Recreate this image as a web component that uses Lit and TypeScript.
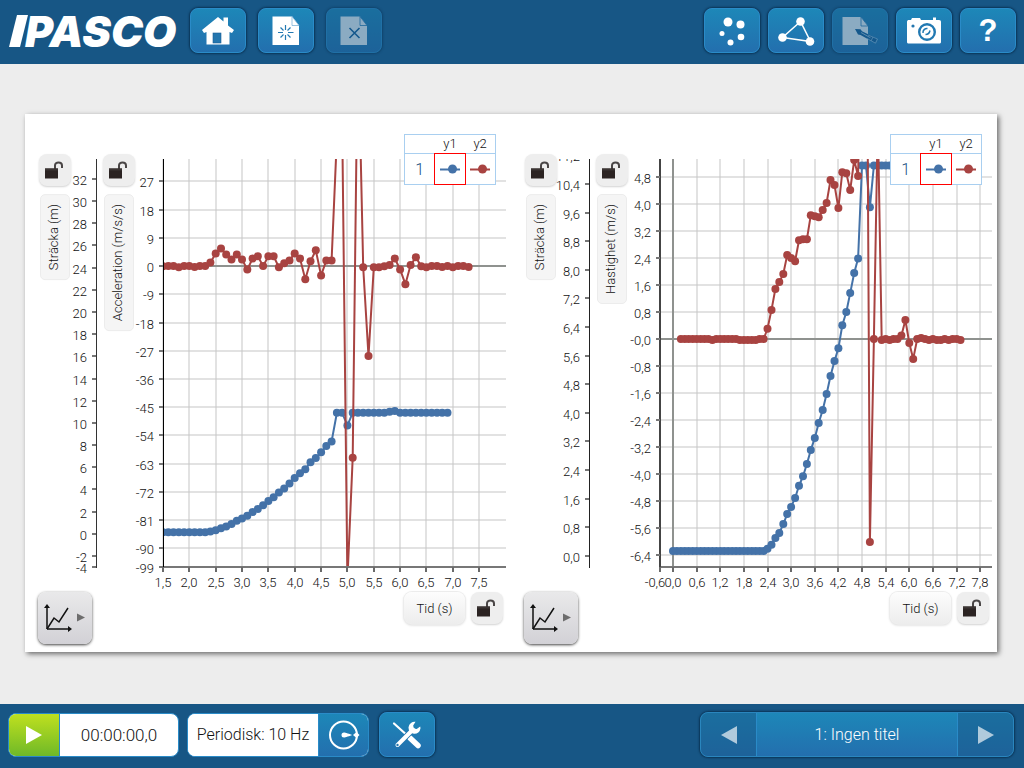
import { LitElement, html, svg, css, nothing } from "lit";
import { customElement, property, state } from "lit/decorators.js";

type Point = [number, number];

interface Axis {
  title: string;
  unitLabel: string;
  x: number;
  min: number;
  max: number;
  ticks: number[];
  endTick?: number;
  decimals: number;
  color: string;
  thickness: number;
}

interface GraphConfig {
  id: string;
  railWidth: number;
  distance: Axis;
  second: Axis;
  timeMin: number;
  timeMax: number;
  timeTicks: number[];
  timeEnd?: number;
  series: Point[];
}

const range = (from: number, to: number, step: number): number[] => {
  const out: number[] = [];
  const n = Math.round((to - from) / step);
  for (let i = 0; i <= n; i++) out.push(from + i * step);
  return out;
};

const timed = (start: number, values: number[]): Point[] =>
  values.map((v, i) => [start + i * 0.1, v] as Point);

const swedish = (v: number, decimals: number): string => v.toFixed(decimals).replace(".", ",");

const distanceRun = timed(0, [
  ...Array(24).fill(0.14),
  0.2, 0.31, 0.5, 0.64, 0.89, 1.17, 1.37, 1.62, 1.96, 2.23, 2.57, 2.96, 3.3, 3.72, 4.08, 4.53,
  5.03, 5.45, 5.81, 6.45, 6.82, 7.35, 7.91, 8.32, 10.92, 10.92, 9.75,
  ...Array(7).fill(10.92), 11.0, 11.08, ...Array(10).fill(10.92),
]);

const accelerationRun = timed(1.5, [
  -0.1, 0, 0, -0.4, 0, 0, -0.3, 0, 0, 1.1, 4, 5.6, 3.7, 2.1, 3.7, 2.1, -1.1, 2.4, 3.1, 0, 3.1,
  3.1, -0.4, 0.9, 1.8, 4, 2.4, -4.2, 1.5, 5, -3, 1.8, 1.8, 41, 48, -100, -61.1, 75, -0.4, -28.7,
  -0.4, -0.4, -0.1, 0.3, 2.4, -1.1, -5.8, 0.3, 2.8, -0.1, -0.4, 0, 0, -0.3, 0, -0.4, 0, 0, -0.3,
]);

const velocityRun = timed(0.2, [
  0, 0, 0, 0, 0, 0, 0, 0, -0.03, 0, 0, 0, 0, 0, 0, -0.03, -0.03, -0.03, -0.03, -0.03, 0, 0,
  0.3, 0.86, 1.48, 1.68, 1.92, 2.48, 2.39, 2.3, 2.92, 2.95, 2.95, 3.66, 3.63, 3.6, 3.81, 4.02,
  4.7, 4.55, 3.87, 4.93, 4.9, 4.4, 5.29, 4.82, 11, 15, -6, 0, 6.5, -0.03, 0, -0.03, 0, 0, 0.1,
  0.56, -0.12, -0.59, 0, 0.03, 0, -0.03, 0, -0.03, -0.03, 0, -0.03, 0, 0, -0.03,
]);

const graphs: GraphConfig[] = [
  {
    id: "acceleration",
    railWidth: 64,
    distance: {
      title: "Sträcka", unitLabel: "(m)", x: 71, min: -3, max: 33.8,
      ticks: range(-2, 32, 2), endTick: -4, decimals: 0, color: "#333", thickness: 1,
    },
    second: {
      title: "Acceleration", unitLabel: "(m/s/s)", x: 138, min: -95.9, max: 34.1,
      ticks: range(-90, 27, 9), endTick: -99, decimals: 0, color: "#000", thickness: 1,
    },
    timeMin: 1.5,
    timeMax: 8.01,
    timeTicks: range(1.5, 7.5, 0.5),
    series: accelerationRun,
  },
  {
    id: "velocity",
    railWidth: 71,
    distance: {
      title: "Sträcka", unitLabel: "(m)", x: 78, min: -0.31, max: 11.1,
      ticks: range(0, 11.2, 0.8), decimals: 1, color: "#222", thickness: 1,
    },
    second: {
      title: "Hastighet", unitLabel: "(m/s)", x: 149, min: -6.74, max: 5.32,
      ticks: range(-6.4, 4.8, 0.8), decimals: 1, color: "#444", thickness: 2,
    },
    timeMin: -0.33,
    timeMax: 8.1,
    timeTicks: range(0, 7.8, 0.6),
    timeEnd: -0.6,
    series: velocityRun,
  },
];

const lockIcon = html`
  <svg width="20" height="18" viewBox="1 0 20 18" aria-hidden="true">
    <path d="M11 8V4.6C11 2.6 12.5 1.4 14.5 1.4S18 2.6 18 4.6V7" fill="none" stroke="#4a4646" stroke-width="2" />
    <rect x="1" y="7.5" width="13" height="10" fill="#2b2322" />
    <rect x="1" y="7.5" width="13" height="2" fill="#3b3433" />
  </svg>`;

@customElement("data-graph")
class DataGraph extends LitElement {
  @property({ attribute: false }) config!: GraphConfig;
  @state() private w = 486;
  @state() private h = 538;
  private observer?: ResizeObserver;

  static styles = css`
    :host { display: block; min-width: 0; }
    .panel {
      display: grid;
      height: 100%;
      grid-template-rows: 20px 20px minmax(0, 1fr) 60px;
      grid-template-columns: minmax(0, 1fr);
    }
    .canvas { grid-area: 1 / 1 / -1 / -1; min-height: 0; overflow: hidden; }
    .canvas svg { display: block; }
    .rails { grid-area: 3 / 1; display: flex; padding-left: 14px; align-items: flex-start; }
    .rail { display: flex; flex-direction: column; align-items: flex-start; gap: 8px; }
    button {
      font: inherit; color: #111; border: 0; margin: 0; padding: 0; cursor: pointer;
      display: flex; align-items: center; justify-content: center;
    }
    .lock {
      width: 32px; height: 32px; border-radius: 8px; background: #eee;
      box-shadow: 0 1px 2px rgba(0, 0, 0, 0.18);
    }
    .axis-title {
      width: 30px; margin-left: 1px; padding: 9px 0 9px 2px; border-radius: 5px; background: #f5f5f5;
      border: 1px solid #ececec; box-sizing: border-box; font-size: 13px; line-height: 26px;
      writing-mode: vertical-rl; transform: rotate(180deg); white-space: nowrap;
    }
    .legend-wrap { grid-area: 2 / 1 / 4 / 2; justify-self: end; align-self: start; padding-right: 15px; }
    .legend {
      border-collapse: collapse; background: #fff; border: 1px solid #a9cff0;
      font-size: 13px; color: #111; table-layout: fixed; width: 92px;
    }
    .legend th { font-weight: inherit; padding: 0; height: 18px; line-height: 18px; }
    .legend td { padding: 0; height: 30px; text-align: center; }
    .legend tbody tr { border-top: 1px solid #a9cff0; }
    .legend .run { color: #175082; font-size: 16px; text-align: center; }
    .legend .selected { border: 1px solid #f00; }
    .legend svg { display: block; margin: 0 auto; }
    .foot {
      grid-area: 4 / 1; display: flex; align-items: flex-start; gap: 6px;
      padding: 0 8px 0 13px;
    }
    .menu {
      width: 54px; height: 52px; margin-right: auto; border-radius: 8px;
      background: linear-gradient(#e9e9ea, #d2d1d6); box-shadow: 0 1px 3px rgba(0, 0, 0, 0.75);
    }
    .time {
      width: 61px; height: 32px; border-radius: 8px; font-size: 13px;
      background: linear-gradient(#fdfdfd, #ededed); box-shadow: 0 0 0 1px #ececec, 0 1px 3px rgba(0, 0, 0, 0.2);
    }
  `;

  firstUpdated() {
    const box = this.renderRoot.querySelector(".canvas") as HTMLElement;
    this.observer = new ResizeObserver(() => {
      this.w = box.clientWidth || this.w;
      this.h = box.clientHeight || this.h;
    });
    this.observer.observe(box);
  }

  disconnectedCallback() {
    super.disconnectedCallback();
    this.observer?.disconnect();
  }

  private trace(points: Point[], color: string, x: (v: number) => number, y: (v: number) => number) {
    const path = points.map(([t, v]) => `${x(t).toFixed(1)},${y(v).toFixed(1)}`).join(" ");
    return svg`
      <polyline points=${path} fill="none" stroke=${color} stroke-width="2" />
      ${points.map(([t, v]) => svg`<circle cx=${x(t).toFixed(1)} cy=${y(v).toFixed(1)} r="4" fill=${color} />`)}`;
  }

  private axis(axis: Axis, y: (v: number) => number, top: number, bottom: number) {
    const marks = axis.ticks.map((v) => ({ v, at: y(v) }));
    if (axis.endTick !== undefined) marks.push({ v: axis.endTick, at: bottom });
    const lineX = axis.thickness % 2 ? axis.x + 0.5 : axis.x;
    return svg`
      <line x1=${lineX} x2=${lineX} y1=${top} y2=${bottom + 1} stroke=${axis.color} stroke-width=${axis.thickness} />
      ${marks.map(({ v, at }) => {
        const ty = Math.round(at);
        return svg`
          ${ty >= top ? svg`<line x1=${axis.x - 4} x2=${axis.x} y1=${ty} y2=${ty} stroke="#777" stroke-width="2" />` : nothing}
          <text x=${axis.x - 9} y=${ty + 6} text-anchor="end">${
            Math.abs(v) < 1e-6 && axis.title === "Hastighet" ? "-0,0" : swedish(v, axis.decimals)
          }</text>`;
      })}`;
  }

  private chart() {
    const c = this.config;
    const { w, h } = this;
    const left = c.second.x;
    const right = w - 5;
    const top = 45;
    const bottom = h - 85;
    const x = (v: number) => left + ((v - c.timeMin) / (c.timeMax - c.timeMin)) * (right - left);
    const scale = (a: Axis) => (v: number) => bottom - ((v - a.min) / (a.max - a.min)) * (bottom - top);
    const yd = scale(c.distance);
    const ys = scale(c.second);
    const zeroX = c.timeMin < 0 ? Math.round(x(0)) : undefined;
    const zeroY = Math.round(ys(0));
    const times = c.timeTicks.map((v) => ({ v, at: Math.round(x(v)) }));
    if (c.timeEnd !== undefined) times.unshift({ v: c.timeEnd, at: left });
    return html`
      <svg width=${w} height=${h} viewBox="0 0 ${w} ${h}" role="img"
        aria-label="${c.distance.title} och ${c.second.title} mot tid"
        font-size="13" fill="#111">
        <defs>
          <clipPath id="plot"><rect x=${left} y=${top} width=${right - left} height=${bottom - top} /></clipPath>
          <clipPath id="labels"><rect x="0" y=${top} width=${w} height=${h - top} /></clipPath>
        </defs>
        <g stroke="#c6c6c6" stroke-opacity="0.5" stroke-width="2">
          ${times.map(({ at }) => svg`<line x1=${at} x2=${at} y1=${top} y2=${bottom} />`)}
          ${c.second.ticks.map((v) => {
            const ty = Math.round(ys(v));
            return svg`<line x1=${left} x2=${right} y1=${ty} y2=${ty} />`;
          })}
        </g>
        <g stroke="#8f928f" stroke-width="2">
          <line x1=${left} x2=${right} y1=${zeroY} y2=${zeroY} />
          ${zeroX === undefined ? nothing : svg`<line x1=${zeroX} x2=${zeroX} y1=${top} y2=${bottom} />`}
        </g>
        <g clip-path="url(#plot)">
          ${this.trace(distanceRun, "#4472a8", x, yd)}
          ${this.trace(c.series, "#a84341", x, ys)}
        </g>
        <line x1=${left} x2=${right} y1=${bottom} y2=${bottom} stroke="#777" stroke-width="2" />
        <g clip-path="url(#labels)">
          ${this.axis(c.distance, yd, top, bottom)}
          ${this.axis(c.second, ys, top, bottom)}
          ${times.map(({ v, at }) => svg`
            <line x1=${at} x2=${at} y1=${bottom} y2=${bottom + 5} stroke="#6a6a6a" stroke-width="2" />
            <text x=${v < 0 ? at - 5 : at} y=${bottom + 20} text-anchor="middle">${swedish(v, 1)}</text>`)}
        </g>
      </svg>`;
  }

  private rail(axis: Axis) {
    return html`
      <div class="rail">
        <button class="lock" aria-label="Lås axeln ${axis.title}">${lockIcon}</button>
        <button class="axis-title">${axis.title} ${axis.unitLabel}</button>
      </div>`;
  }

  private swatch(color: string) {
    return html`<svg width="20" height="10" viewBox="0 0 20 10" aria-hidden="true">
      <line x1="0" x2="20" y1="5.5" y2="5.5" stroke=${color} stroke-width="2" />
      <circle cx="12.5" cy="5" r="4.5" fill=${color} />
    </svg>`;
  }

  render() {
    const c = this.config;
    return html`
      <section class="panel">
        <div class="canvas">${this.chart()}</div>
        <div class="rails">
          <div style="width:${c.railWidth}px">${this.rail(c.distance)}</div>
          ${this.rail(c.second)}
        </div>
        <div class="legend-wrap">
          <table class="legend">
            <thead><tr><th></th><th scope="col">y1</th><th scope="col">y2</th></tr></thead>
            <tbody>
              <tr>
                <td class="run">1</td>
                <td class="selected">${this.swatch("#4472a8")}</td>
                <td>${this.swatch("#a84341")}</td>
              </tr>
            </tbody>
          </table>
        </div>
        <div class="foot">
          <button class="menu" aria-label="Diagramverktyg">
            <svg width="44" height="30" viewBox="0 0 44 30" aria-hidden="true">
              <path d="M4 26V4M4 26H26" fill="none" stroke="#111" stroke-width="1.5" />
              <path d="M4 1l3 4H1zM29 26l-4-3v6z" fill="#111" />
              <path d="M4 26l7-11 5 4 9-14" fill="none" stroke="#111" stroke-width="1.5" />
              <path d="M34 10.500v8l8-4z" fill="#6d6d6d" />
            </svg>
          </button>
          <button class="time">Tid (s)</button>
          <button class="lock" aria-label="Lås tidsaxeln">${lockIcon}</button>
        </div>
      </section>`;
  }
}

const icons = {
  home: html`<svg width="32" height="30" viewBox="0 0 32 30" aria-hidden="true">
    <path fill="#fff" d="M16 1l5.500 4.500V1.500h4.500v8L32 14l-2 3-2.500-1v12.500H4.500V16L2 17l-2-3z" />
    <rect x="11" y="17" width="8" height="10" fill="#2476ae" stroke="#1a5f96" stroke-width="0.6" />
  </svg>`,
  newPage: html`<svg width="28" height="30" viewBox="0 0 28 30" aria-hidden="true">
    <path fill="#fff" d="M0.500 0.500h19.500l7 9v19.500H0.500z" />
    <path fill="#fff" stroke="#7fb4d8" stroke-width="0.8" d="M20 0.500v9h7z" />
    <g stroke="#2279b2" stroke-width="1.200">
      <path d="M13.500 9v5M13.500 19v5M6 16.500h5M16 16.500h5.500M8.500 11.500l3 3M15.500 18.500l3 3M18.500 11.500l-3 3M11.500 18.500l-3 3" />
    </g>
  </svg>`,
  deletePage: html`<svg width="28" height="30" viewBox="0 0 28 30" aria-hidden="true">
    <path fill="#fff" d="M0.500 0.500h19.500l7 9v19.500H0.500z" />
    <path fill="#fff" stroke="#2279b2" stroke-width="0.8" d="M20 0.500v9h7z" />
    <path stroke="#125a94" stroke-width="1.600" d="M9.500 12l10 10M19.500 12l-10 10" />
  </svg>`,
  dots: html`<svg width="28" height="30" viewBox="0 0 28 30" aria-hidden="true" fill="#fff">
    <circle cx="10" cy="6" r="4.500" /><circle cx="22.500" cy="8.500" r="4" />
    <circle cx="4" cy="17.500" r="2.500" /><circle cx="23" cy="21" r="3.300" /><circle cx="12.500" cy="26.500" r="3" />
  </svg>`,
  triangle: html`<svg width="38" height="30" viewBox="0 0 38 30" aria-hidden="true" fill="#fff">
    <path d="M23.500 5.500L5.500 21.500l28 4z" fill="none" stroke="#fff" stroke-width="1.500" />
    <circle cx="23.500" cy="5.500" r="4.300" /><circle cx="5.500" cy="21.500" r="4.300" /><circle cx="33" cy="25.500" r="4.300" />
  </svg>`,
  journal: html`<svg width="38" height="30" viewBox="0 0 38 30" aria-hidden="true">
    <path fill="#fff" d="M1.500 1h18.500l7 9v19H1.500z" />
    <path fill="#fff" stroke="#2279b2" stroke-width="0.800" d="M20 1v9h7z" />
    <path fill="#125a94" d="M14 13l5.500.3 1.500 2L36 22.500l-2 4.500-14.500-8-2.500-.5z" />
    <path d="M20 16.500l9.500 5.300" stroke="#fff" stroke-width="0.600" />
    <path fill="none" stroke="#9ac4e2" stroke-width="0.800" d="M27 19l9.500 4-2 4.200L26 22.500M32 21l-2 4" />
  </svg>`,
  camera: html`<svg width="36" height="30" viewBox="0 0 36 30" aria-hidden="true">
    <path fill="#fff" d="M3 4h2l1-2h8l1 2h12V1.500h3V4h3c1.500 0 2 .8 2 2v20c0 1-.8 1.500-2 1.500H3c-1.200 0-2-.500-2-1.500V6C1 4.500 1.800 4 3 4z" />
    <circle cx="7" cy="10" r="1.600" fill="#2476ae" />
    <circle cx="21" cy="16" r="7.800" fill="#fff" stroke="#2279b2" stroke-width="2.400" />
    <path d="M17 17a4 4 0 0 1 4.500-4.500M19.500 18.500c2 0 4-1.500 4.500-4" fill="none" stroke="#2279b2" stroke-width="1.500" />
  </svg>`,
  tools: html`<svg width="30" height="28" viewBox="0 0 30 28" aria-hidden="true">
    <path d="M2 2.500L17 16" stroke="#fff" stroke-width="2.200" stroke-linecap="round" />
    <path d="M18 17l8 7.500" stroke="#fff" stroke-width="5.500" stroke-linecap="round" />
    <path d="M6 23.500L21.500 8" stroke="#2476ae" stroke-width="6" />
    <path d="M5.500 24L21 8.500" stroke="#fff" stroke-width="4" stroke-linecap="round" />
    <path d="M23.500 0.800a6 6 0 1 0 5 6.500l-.3-1.800-3.500 2.500-3-.5-.5-3z" fill="#fff" />
    <circle cx="5.500" cy="24" r="1.200" fill="#2476ae" />
  </svg>`,
  rate: html`<svg width="32" height="32" viewBox="0 0 32 32" aria-hidden="true">
    <circle cx="15.500" cy="16" r="13.500" fill="none" stroke="#fff" stroke-width="2" />
    <path d="M16 13.500c1 0 6 1.700 8.500 2.500-2.500.8-7.500 2.500-8.500 2.500a2.500 2.500 0 0 1 0-5z" fill="#fff" />
    <path d="M25 16l3.500-3 3 3-3 3z" fill="#fff" />
  </svg>`,
  right: html`<svg width="18" height="20" viewBox="0 0 18 20" aria-hidden="true"><path fill="#fff" d="M1 1l16 9-16 9z" /></svg>`,
  left: html`<svg width="18" height="20" viewBox="0 0 18 20" aria-hidden="true"><path fill="#fff" d="M17 1L1 10l16 9z" /></svg>`,
};

@customElement("app-root")
class AppRoot extends LitElement {
  static styles = css`
    :host {
      display: flex; flex-direction: column; min-height: 100vh; background: #ededed; overflow: hidden;
      font-family: Roboto, "Liberation Sans", sans-serif; font-weight: 300; color: #111;
    }
    .bar {
      display: flex; align-items: center; height: 64px; padding: 0 8px; box-sizing: border-box;
      background: #175685; flex: none;
    }
    .top { padding-bottom: 3px; }
    .bottom { padding-bottom: 3px; gap: 8px; }
    .logo { display: block; margin-right: 10px; flex: none; }
    .logo text { font: italic 900 43px Inter, sans-serif; fill: #fff; }
    .group { display: flex; gap: 12px; }
    .group.end { gap: 8px; margin-left: auto; }
    button { font: inherit; color: inherit; margin: 0; padding: 0; cursor: pointer; }
    .tool {
      width: 56px; height: 45px; border-radius: 8px; border: 1px solid #2a8bc8; color: #fff;
      background: linear-gradient(#1d87b8, #236fae); box-shadow: 0 0 2px 1px rgba(6, 40, 70, 0.75);
      display: flex; align-items: center; justify-content: center;
    }
    .tool:disabled { opacity: 0.5; cursor: default; }
    .help { font: 700 31px "Liberation Sans", sans-serif; }
    main { flex: 1; display: flex; padding: 50px 27px 52px 25px; min-height: 500px; }
    .sheet {
      flex: 1; display: grid; grid-template-columns: repeat(2, minmax(0, 1fr)); background: #fff;
      box-shadow: 2px 2px 5px rgba(0, 0, 0, 0.55); min-width: 0;
    }
    .combo {
      display: flex; height: 44px; box-sizing: border-box; border: 1px solid #2a8bc8;
      border-radius: 8px; overflow: hidden; background: #fff; font-size: 16px;
    }
    .play {
      width: 51px; border: 0; border-right: 1px solid #2a8bc8;
      background: linear-gradient(#bfe01f, #6fb928); display: flex; align-items: center; justify-content: center;
    }
    .clock { width: 118px; display: flex; align-items: center; justify-content: center; font-size: 17px; }
    .rate { width: 130px; border: 0; background: #fff; color: #111; }
    .rate-icon {
      width: 50px; border: 0; border-left: 1px solid #2a8bc8; background: linear-gradient(#1d87b8, #236fae);
      display: flex; align-items: center; justify-content: center;
    }
    .bottom .tool { margin-left: 2px; }
    .pager {
      display: flex; height: 45px; margin-left: auto; margin-right: 2px; border-radius: 8px; overflow: hidden;
      box-sizing: border-box; border: 1px solid #2a86be; color: #fff; font-size: 16px;
      background: linear-gradient(#1d87b8, #236fae); box-shadow: 0 0 2px 1px rgba(6, 40, 70, 0.75);
    }
    .pager button { border: 0; background: none; display: flex; align-items: center; justify-content: center; }
    .step { width: 55px; }
    .pager .step { background: rgba(23, 86, 133, 0.5); }
    .step svg { opacity: 0.65; }
    .pager .name { width: 202px; border-left: 1px solid #2a8bc8; border-right: 1px solid #2a8bc8; }
  `;

  render() {
    return html`
      <header class="bar top">
        <svg class="logo" width="172" height="40" viewBox="0 0 172 40" role="img" aria-label="PASCO">
          <path fill="#fff" d="M9 4h11L12 36H1z" />
          <text x="17" y="36">PASCO</text>
        </svg>
        <nav class="group">
          <button class="tool" aria-label="Hem">${icons.home}</button>
          <button class="tool" aria-label="Ny sida">${icons.newPage}</button>
          <button class="tool" aria-label="Radera sida" disabled>${icons.deletePage}</button>
        </nav>
        <nav class="group end">
          <button class="tool" aria-label="Sensorer">${icons.dots}</button>
          <button class="tool" aria-label="Dela">${icons.triangle}</button>
          <button class="tool" aria-label="Journal" disabled>${icons.journal}</button>
          <button class="tool" aria-label="Ögonblicksbild">${icons.camera}</button>
          <button class="tool help" aria-label="Hjälp">?</button>
        </nav>
      </header>
      <main>
        <div class="sheet">
          ${graphs.map((g) => html`<data-graph .config=${g}></data-graph>`)}
        </div>
      </main>
      <footer class="bar bottom">
        <div class="combo">
          <button class="play" aria-label="Starta">${icons.right}</button>
          <output class="clock">00:00:00,0</output>
        </div>
        <div class="combo">
          <button class="rate">Periodisk: 10 Hz</button>
          <button class="rate-icon" aria-label="Samplingsinställningar">${icons.rate}</button>
        </div>
        <button class="tool" aria-label="Verktyg">${icons.tools}</button>
        <div class="pager">
          <button class="step" aria-label="Föregående sida">${icons.left}</button>
          <button class="name">1: Ingen titel</button>
          <button class="step" aria-label="Nästa sida">${icons.right}</button>
        </div>
      </footer>`;
  }
}
